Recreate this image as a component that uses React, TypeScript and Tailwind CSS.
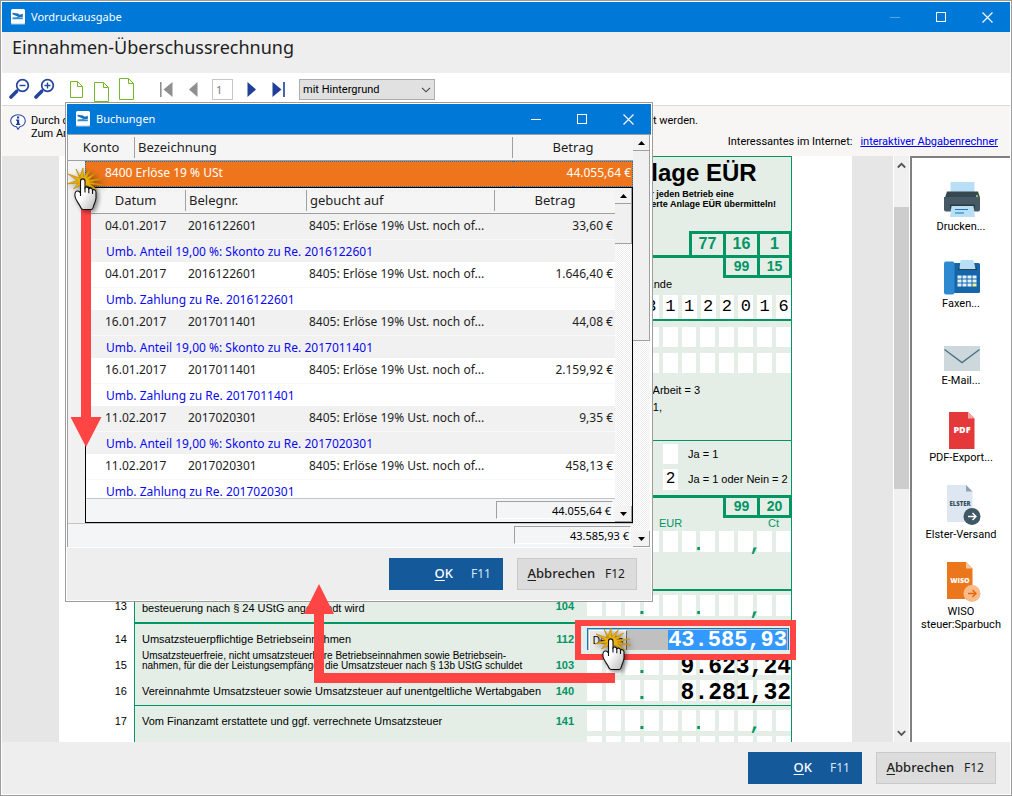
import type { ReactNode } from "react";
import clsx from "clsx";

interface Booking {
  date: string;
  receipt: string;
  account: string;
  amount: string;
  note: string;
}

const bookings: Booking[] = [
  {
    date: "04.01.2017",
    receipt: "2016122601",
    account: "8405: Erlöse 19% Ust. noch of...",
    amount: "33,60 €",
    note: "Umb. Anteil 19,00 %: Skonto zu Re. 2016122601",
  },
  {
    date: "04.01.2017",
    receipt: "2016122601",
    account: "8405: Erlöse 19% Ust. noch of...",
    amount: "1.646,40 €",
    note: "Umb. Zahlung zu Re. 2016122601",
  },
  {
    date: "16.01.2017",
    receipt: "2017011401",
    account: "8405: Erlöse 19% Ust. noch of...",
    amount: "44,08 €",
    note: "Umb. Anteil 19,00 %: Skonto zu Re. 2017011401",
  },
  {
    date: "16.01.2017",
    receipt: "2017011401",
    account: "8405: Erlöse 19% Ust. noch of...",
    amount: "2.159,92 €",
    note: "Umb. Zahlung zu Re. 2017011401",
  },
  {
    date: "11.02.2017",
    receipt: "2017020301",
    account: "8405: Erlöse 19% Ust. noch of...",
    amount: "9,35 €",
    note: "Umb. Anteil 19,00 %: Skonto zu Re. 2017020301",
  },
  {
    date: "11.02.2017",
    receipt: "2017020301",
    account: "8405: Erlöse 19% Ust. noch of...",
    amount: "458,13 €",
    note: "Umb. Zahlung zu Re. 2017020301",
  },
];

function AppIcon() {
  return (
    <svg width="15" height="16" viewBox="0 0 15 16">
      <rect x="0" y="0" width="14" height="15" rx="1.5" fill="#fff" />
      <path d="M0 14.5h14v1H0z" fill="#a9cdea" />
      <path d="M1.500 3.800l5.500.7 1.800 1.200 3-.9v3.600l-4.300-.4-6-2.800z" fill="#1c6fb8" />
      <path d="M1.500 8.600l5.500-.7 4.800 1v1.300H1.500z" fill="#2d8fd6" />
    </svg>
  );
}

function TitleBar({ title, dimmed }: { title: string; dimmed?: boolean }) {
  return (
    <div className="flex h-[30px] shrink-0 items-center bg-[#0078d7] pl-[9px] text-white">
      <AppIcon />
      <span className="ml-[5px] flex-1 text-[11px]">{title}</span>
      <button
        aria-label="Minimieren"
        className="flex h-[30px] w-[46px] items-center justify-center"
      >
        <svg width="11" height="11" viewBox="0 0 11 11">
          <path d="M0 5.5h10" stroke={dimmed ? "#5aa7e6" : "#fff"} />
        </svg>
      </button>
      <button
        aria-label="Maximieren"
        className="flex h-[30px] w-[46px] items-center justify-center"
      >
        <svg width="11" height="11" viewBox="0 0 11 11">
          <rect x=".5" y=".5" width="9" height="9" fill="none" stroke="#fff" />
        </svg>
      </button>
      <button
        aria-label="Schließen"
        className="flex h-[30px] w-[46px] items-center justify-center"
      >
        <svg width="11" height="11" viewBox="0 0 11 11">
          <path d="M.5.5l10 10M10.5.5l-10 10" stroke="#fff" strokeWidth="1.1" />
        </svg>
      </button>
    </div>
  );
}

function DialogButtons() {
  return (
    <div className="flex justify-end gap-[14px] text-[13px]">
      <button className="flex h-8 w-[114px] items-center justify-end gap-[18px] bg-[#14599a] pr-3 text-white">
        <span className="font-medium">
          <u className="underline-offset-2">O</u>K
        </span>
        <span className="text-xs text-[#d5e8f7]">F11</span>
      </button>
      <button className="flex h-8 w-[120px] items-center justify-end gap-[10px] border border-[#cacaca] bg-[#dcdcdc] pr-[11px] text-[#1e1e1e]">
        <span className="font-medium">
          <u className="underline-offset-2">A</u>bbrechen
        </span>
        <span className="text-xs">F12</span>
      </button>
    </div>
  );
}

function Magnifier({ plus }: { plus?: boolean }) {
  return (
    <svg width="22" height="22" viewBox="0 0 22 22">
      <circle cx="13.5" cy="7.5" r="5.8" fill="#fff" stroke="#23459c" strokeWidth="1.7" />
      <path d="M10.5 7.5h6" stroke="#23459c" strokeWidth="1.4" />
      {plus && <path d="M13.5 4.5v6" stroke="#23459c" strokeWidth="1.4" />}
      <path d="M8.8 12L7 13.8" stroke="#23459c" strokeWidth="2" />
      <path d="M7.5 13.5L2 19" stroke="#23459c" strokeWidth="3.6" strokeLinecap="round" />
    </svg>
  );
}

function PageIcon({ w, h }: { w: number; h: number }) {
  return (
    <svg width={w} height={h} viewBox={`0 0 ${w} ${h}`}>
      <path
        d={`M.5.5H${w - 5.5}L${w - 0.5} 5.5V${h - 0.5}H.5zM${w - 5.5} .5V5.5H${w - 0.5}`}
        fill="#fff"
        stroke="#76b82a"
      />
    </svg>
  );
}

function Toolbar() {
  return (
    <div className="flex h-[33px] shrink-0 items-center border-b border-[#dadada] bg-white pl-[7px]">
      <button aria-label="Verkleinern">
        <Magnifier />
      </button>
      <button aria-label="Vergrößern" className="ml-[3px]">
        <Magnifier plus />
      </button>
      <button aria-label="Ganze Seite" className="ml-[14px]">
        <PageIcon w={13} h={17} />
      </button>
      <button aria-label="Seitenbreite" className="ml-[11px] pt-[6px]">
        <PageIcon w={15} h={20} />
      </button>
      <button aria-label="Originalgröße" className="ml-[10px]">
        <PageIcon w={15} h={22} />
      </button>
      <button aria-label="Erste Seite" className="ml-[26px]">
        <svg width="13" height="15" viewBox="0 0 13 15">
          <path d="M0 0h1.6v15H0zM12.500 0v15L3.500 7.500z" fill="#8f8f8f" />
        </svg>
      </button>
      <button aria-label="Vorherige Seite" className="ml-4">
        <svg width="9" height="15" viewBox="0 0 9 15">
          <path d="M8.500 0v15L0 7.500z" fill="#8f8f8f" />
        </svg>
      </button>
      <input
        aria-label="Seite"
        defaultValue="1"
        className="ml-[14px] h-[21px] w-[21px] border border-[#c6c6c6] pl-[3px] text-[11px] text-[#777]"
      />
      <button aria-label="Nächste Seite" className="ml-[14px]">
        <svg width="9" height="15" viewBox="0 0 9 15">
          <path d="M.5 0v15L9 7.500z" fill="#1f3f98" />
        </svg>
      </button>
      <button aria-label="Letzte Seite" className="ml-4">
        <svg width="13" height="15" viewBox="0 0 13 15">
          <path d="M11.200 0h1.600v15h-1.600zM.5 0v15l9-7.500z" fill="#1f3f98" />
        </svg>
      </button>
      <div className="relative ml-[14px]">
        <select
          aria-label="Druckansicht"
          className="block h-[21px] w-[136px] appearance-none border border-[#adadad] bg-[#e1e1e1] pl-[3px] font-['Roboto'] text-[11px] leading-none text-black"
        >
          <option>mit Hintergrund</option>
          <option>ohne Hintergrund</option>
        </select>
        <svg className="pointer-events-none absolute top-2 right-1" width="10" height="6" viewBox="0 0 10 6">
          <path d="M1 .8l4 4 4-4" fill="none" stroke="#444" strokeWidth="1.1" />
        </svg>
      </div>
    </div>
  );
}

function InfoBar() {
  return (
    <div className="flex h-[50px] shrink-0 bg-[#f7f6f5] pr-3 pl-2 font-['Roboto'] text-[11px] leading-[13px] text-black">
      <svg className="mt-2 shrink-0" width="16" height="16" viewBox="0 0 16 16">
        <path
          d="M8 .7c4 0 7.300 2.600 7.300 6s-2.800 5.700-5.500 6L8 15.300l-1.500-2.600C3.500 12.400.7 10 .7 6.700S4 .7 8 .7z"
          fill="#fff"
          stroke="#2a4ba0"
          strokeWidth="1.1"
        />
        <path d="M7 2.500h2.200v2H7zM6 5.500h3.200v4.200h1v1.300H6V9.700h1V6.800H6z" fill="#1f3f98" />
      </svg>
      <div className="ml-[5px] flex w-[667px] shrink-0 items-start justify-between pt-2">
        <p>
          Durch die Schaltfläche
          <br />
          Zum Anzeigen
        </p>
        <p>angezeigt werden.</p>
      </div>
      <p className="-ml-[200px] flex-1 self-end pb-2 text-right whitespace-nowrap">
        Interessantes im Internet:
        <a href="#abgabenrechner" className="ml-2 text-[#0000ee] underline">
          interaktiver Abgabenrechner
        </a>
      </p>
    </div>
  );
}

function Cells({ digits = "", count = 11 }: { digits?: string; count?: number }) {
  return (
    <div className={clsx("grid h-5 gap-1", count === 11 ? "w-[204px] grid-cols-11" : "w-[147px] grid-cols-8")}>
      {Array.from({ length: count }, (_, i) => (
        <span
          key={i}
          className="bg-white text-center font-['Liberation_Mono'] text-[17px] leading-[24px] text-black"
        >
          {digits[i]}
        </span>
      ))}
    </div>
  );
}

const marks: Record<number, string> = { 2: ".", 5: ".", 8: "," };

// eleven boxes with the printed thousands and decimal marks; a value is typed over them
function AmountField({ value }: { value?: string }) {
  return (
    <div className="relative">
      <div className="grid h-[21px] w-[204px] grid-cols-11 gap-1">
        {Array.from({ length: 11 }, (_, i) => (
          <span key={i} className="relative bg-white">
            {marks[i] && !(value && i > 2) && (
              <span className="absolute -right-2 bottom-0 w-3 text-center font-['Liberation_Mono'] text-[20px] leading-[14px] font-bold text-[#009663]">
                {marks[i]}
              </span>
            )}
          </span>
        ))}
      </div>
      {value && (
        <span className="absolute right-0 -bottom-1 font-['Liberation_Mono'] text-[23px] leading-[24px] font-bold text-black">
          {value}
        </span>
      )}
    </div>
  );
}

interface FormRowProps {
  no?: string;
  code?: string;
  className?: string;
  text?: ReactNode;
  children?: ReactNode;
}

function FormRow({ no, code, className, text, children }: FormRowProps) {
  return (
    <div className="flex">
      <div className="w-[75px] shrink-0 pt-1 pr-[7px] text-right leading-[22px]">{no}</div>
      <div className={clsx("flex min-w-0 flex-1 items-start border-x border-[#009663] bg-[#e4ede6] pl-[7px]", className)}>
        <div className="min-w-0 flex-1 leading-[22px] whitespace-nowrap">{text}</div>
        <div className="mr-[13px] pt-1 leading-[22px] font-bold text-[#009663]">{code}</div>
        <div className="pt-1">{children}</div>
      </div>
    </div>
  );
}

function FormSection({ className, children }: { className?: string; children: ReactNode }) {
  return (
    <div
      className={clsx(
        "ml-[75px] flex flex-col items-end border-x border-[#009663] bg-[#e4ede6]",
        className,
      )}
    >
      {children}
    </div>
  );
}

function CodePair({ left, right }: { left: string; right: string }) {
  return (
    <div className="-mr-px flex h-5 border-[3px] border-t-0 border-[#009663] text-center text-[14px] leading-[17px] font-bold text-[#009663]">
      <span className="w-[31px]">{left}</span>
      <span className="w-[32px] border-l-[3px]">{right}</span>
    </div>
  );
}

function TaxForm() {
  return (
    <div className="w-[793px] shrink-0 bg-white pr-[60px] font-['Liberation_Sans'] text-[11px] text-black">
      <FormSection className="h-[102px] justify-between border-t border-b-[3px]">
        <div className="pr-[15px]">
          <h2 className="pt-[2px] text-[24px] leading-[27px] font-bold">Anlage EÜR</h2>
          <p className="pt-[3px] text-[9px] leading-[10px] font-bold whitespace-nowrap">
            Bitte für jeden Betrieb eine
            <br />
            gesonderte Anlage EÜR übermitteln!
          </p>
        </div>
        <div className="-mr-px flex h-[24px] border-[3px] border-b-0 border-[#009663] text-center text-[16px] leading-[20px] font-bold text-[#009663]">
          <span className="w-[31px]">77</span>
          <span className="w-[34px] border-l-[3px]">16</span>
          <span className="w-[32px] border-l-[3px]">1</span>
        </div>
      </FormSection>
      <FormSection className="h-[63px] border-b-2">
        <CodePair left="99" right="15" />
        <p className="pr-[119px] leading-[12px]">bis Ende</p>
        <div className="pt-[5px]">
          <Cells count={8} digits="31122016" />
        </div>
      </FormSection>
      <FormSection className="h-[120px] gap-[6px] border-b pt-[6px]">
        <Cells />
        <Cells />
        <div className="pt-[3px] leading-[17px]">
          <p className="pr-[91px] text-right">ohne Arbeit = 3</p>
          <p className="pr-[129px] text-right">1,</p>
        </div>
      </FormSection>
      <FormSection className="h-[57px] gap-[5px] border-b-[3px] pt-[3px]">
        <div className="flex w-[128px] items-center gap-[10px]">
          <span className="h-5 w-[15px] bg-white" />
          Ja = 1
        </div>
        <div className="flex w-[128px] items-center gap-[10px] whitespace-nowrap">
          <span className="h-[21px] w-[15px] bg-white text-center font-['Liberation_Mono'] text-[16px] leading-[20px]">2</span>
          Ja = 1 oder Nein = 2
        </div>
      </FormSection>
      <FormSection className="h-[93px] border-b-2">
        <CodePair left="99" right="20" />
        <div className="flex h-[13px] w-[132px] justify-between pr-3 leading-[10px] text-[#009663]">
          <span>EUR</span>
          <span>Ct</span>
        </div>
        <AmountField />
      </FormSection>
      <FormRow no="13" code="104" className="h-[33px] border-b-2" text={<p className="pt-[6px]">besteuerung nach § 24 UStG angewandt wird</p>}>
        <AmountField />
      </FormRow>
      <FormRow no="14" code="112" className="h-[26px]" text={<p className="pt-1">Umsatzsteuerpflichtige Betriebseinnahmen</p>}>
        <div className="mr-[2px] flex h-[25px] w-[202px] items-stretch border border-[#0078d7] bg-[#c0c0c0] p-px">
          <button className="w-[38px] border border-t-white border-r-[#696969] border-b-[#696969] border-l-white bg-[#e8e8e8] text-[10px] leading-none">
            Details
          </button>
          <input
            aria-label="Umsatzsteuerpflichtige Betriebseinnahmen"
            defaultValue="43.585,93"
            className="ml-auto w-[119px] bg-[#3399ff] text-right font-['Liberation_Mono'] text-[22px] font-bold text-white"
          />
        </div>
      </FormRow>
      <FormRow
        no="15"
        code="103"
        className="h-[26px]"
        text={
          <p className="pt-px text-[10px] leading-[10px]">
            Umsatzsteuerfreie, nicht umsatzsteuerbare Betriebseinnahmen sowie Betriebsein-
            <br />
            nahmen, für die der Leistungsempfänger die Umsatzsteuer nach § 13b UStG schuldet
          </p>
        }
      >
        <AmountField value="9.623,24" />
      </FormRow>
      <FormRow
        no="16"
        code="140"
        className="h-[30px] border-b"
        text={<p className="pt-1">Vereinnahmte Umsatzsteuer sowie Umsatzsteuer auf unentgeltliche Wertabgaben</p>}
      >
        <AmountField value="8.281,32" />
      </FormRow>
      <FormRow
        no="17"
        code="141"
        className="h-[26px]"
        text={<p className="pt-1">Vom Finanzamt erstattete und ggf. verrechnete Umsatzsteuer</p>}
      >
        <AmountField />
      </FormRow>
      <FormRow className="h-[26px]">
        <Cells />
      </FormRow>
    </div>
  );
}

function ViewerScrollbar() {
  return (
    <div className="flex w-[17px] shrink-0 flex-col items-center border-x border-white bg-[#f0f0f0]">
      <svg className="my-[6px] shrink-0" width="9" height="7" viewBox="0 0 9 7">
        <path d="M.8 5.500l3.700-3.700 3.700 3.700" fill="none" stroke="#555" strokeWidth="1.800" />
      </svg>
      <div className="mt-8 h-[282px] w-full bg-[#cdcdcd]" />
      <svg className="mt-auto mb-[5px] shrink-0" width="9" height="7" viewBox="0 0 9 7">
        <path d="M.8 1.200l3.700 3.700 3.700-3.700" fill="none" stroke="#555" strokeWidth="1.800" />
      </svg>
    </div>
  );
}

function PrinterIcon() {
  return (
    <svg width="40" height="40" viewBox="0 0 40 40">
      <path d="M9.500 2h24v11h-24z" fill="#b9dff7" />
      <path d="M6 11.500h31l2 6H4z" fill="#37474f" />
      <path d="M3 17h36v12.500a2 2 0 0 1-2 2H5a2 2 0 0 1-2-2z" fill="#455a64" />
      <path d="M9 24.500h25v4H9z" fill="#2c3940" />
      <path d="M10.500 26h22l1.500 11H9z" fill="#b9dff7" />
      <path d="M14 29.500h13M14 33h9" stroke="#1f75b8" strokeWidth="1.200" />
      <circle cx="36" cy="16" r="1.200" fill="#8bc34a" />
    </svg>
  );
}

function FaxIcon() {
  return (
    <svg width="40" height="40" viewBox="0 0 40 40">
      <rect x="12" y="6" width="27" height="30" rx="1.500" fill="#1565ab" />
      <rect x="3" y="4.500" width="10.500" height="33" rx="2" fill="#2e8ad0" />
      <path d="M17 10.500h19v2.500H17z" fill="#2b4552" />
      <path d="M19.500 3h13l2 9h-16z" fill="#b9dff7" />
      {[18.5, 22.5, 26.5].map((y) =>
        [16.5, 21.5, 26.5, 31.5].map((x) => (
          <rect
            key={`${x}-${y}`}
            x={x}
            y={y}
            width="4"
            height="3"
            fill={x === 31.5 && y === 26.5 ? "#f7f08a" : "#e3f2fd"}
          />
        )),
      )}
    </svg>
  );
}

function MailIcon() {
  return (
    <svg width="40" height="40" viewBox="0 0 40 40">
      <path d="M3 12h36v25H3z" fill="#cdd8dc" />
      <path d="M3.500 15.500L21 28.500l17.500-13" fill="none" stroke="#4f7484" strokeWidth="1.500" />
    </svg>
  );
}

interface DocIconProps {
  label: string;
  fill: string;
  fold: string;
  ink: string;
  badge?: string;
  badgeInk?: string;
}

function DocIcon({ label, fill, fold, ink, badge, badgeInk }: DocIconProps) {
  // documents with a round badge sit a little higher and further left
  const x = badge ? 6 : 8;
  const y = badge ? -3 : 1;
  return (
    <svg width="40" height="40" viewBox="0 0 40 40" className="overflow-visible">
      <g transform={`translate(${x} ${y})`}>
        <path d="M0 0h19l6.500 6.500V37H0z" fill={fill} />
        <path d="M19 0l6.500 6.500H19z" fill={fold} />
        <text
          x="13"
          y="21"
          textAnchor="middle"
          fontFamily="Open Sans"
          fontWeight="800"
          fontSize={label === "PDF" ? 9 : label === "WISO" ? 7 : 6}
          fill={ink}
        >
          {label}
        </text>
        {badge && (
          <>
            <circle cx="25" cy="31.500" r="8.500" fill={badge} />
            <path d="M21 31.500h8M25.500 28l3.500 3.500-3.500 3.500" fill="none" stroke={badgeInk} strokeWidth="1.400" />
          </>
        )}
      </g>
    </svg>
  );
}

const exportTargets = [
  { label: "Drucken...", icon: <PrinterIcon /> },
  { label: "Faxen...", icon: <FaxIcon /> },
  { label: "E-Mail...", icon: <MailIcon /> },
  { label: "PDF-Export...", icon: <DocIcon label="PDF" fill="#e5383b" fold="#f6a3a4" ink="#fff" /> },
  {
    label: "Elster-Versand",
    icon: (
      <DocIcon label="ELSTER" fill="#dde6f1" fold="#8fa3b0" ink="#37505e" badge="#3f5863" badgeInk="#fff" />
    ),
  },
  {
    label: "WISO steuer:Sparbuch",
    icon: (
      <DocIcon label="WISO" fill="#ec761c" fold="#f9c79c" ink="#fff" badge="#f8bb8a" badgeInk="#e8650d" />
    ),
  },
];

function ExportSidebar() {
  return (
    <div className="flex w-[100px] shrink-0 flex-col gap-6 border-t-2 border-l-2 border-[#808080] bg-white pt-[22px]">
      {exportTargets.map((target) => (
        <button
          key={target.label}
          className="flex flex-col items-center font-['Roboto'] text-[11px] leading-[13px] text-black"
        >
          {target.icon}
          <span>{target.label}</span>
        </button>
      ))}
    </div>
  );
}

function ArrowButton({ down }: { down?: boolean }) {
  return (
    <button
      aria-label={down ? "Nach unten" : "Nach oben"}
      className="flex h-4 w-full shrink-0 items-center justify-center border-r border-b border-[#a0a0a0] bg-[#f3f3f3]"
    >
      <svg width="7" height="4" viewBox="0 0 7 4">
        <path d={down ? "M0 0h7L3.500 4z" : "M0 4h7L3.500 0z"} fill="#000" />
      </svg>
    </button>
  );
}

function ListScrollbar({ thumb }: { thumb: string }) {
  return (
    <div className="flex w-[17px] shrink-0 flex-col bg-[repeating-conic-gradient(#ffffff_0_25%,#eeeeee_0_50%)] bg-[length:2px_2px]">
      <ArrowButton />
      <div className={clsx("border-r border-b border-[#a0a0a0] bg-[#f0f0f0]", thumb)} />
      <div className="flex-1" />
      <ArrowButton down />
    </div>
  );
}

function SumBox({ value }: { value: string }) {
  return (
    <div className="flex h-[23px] shrink-0 justify-end bg-[#f4f5f7] pt-[2px] pr-[2px]">
      <output className="h-[18px] w-[117px] border border-t-[#a0a0a0] border-r-white border-b-white border-l-[#a0a0a0] pr-px text-right text-[11px] leading-[17px] text-black">
        {value}
      </output>
    </div>
  );
}

interface HeadCellProps {
  className?: string;
  span?: number;
  last?: boolean;
  children: ReactNode;
}

function HeadCell({ className, span, last, children }: HeadCellProps) {
  return (
    <th colSpan={span} className={clsx("border-b border-[#a0a0a0] p-0 py-[2px] font-normal", className)}>
      <div className={clsx("h-[21px] leading-[21px]", !last && "border-r border-[#a0a0a0]")}>{children}</div>
    </th>
  );
}

function BookingList() {
  return (
    <div className="flex min-h-0 flex-1 border border-black bg-white">
      <div className="flex min-w-0 flex-1 flex-col">
        <div className="min-h-0 flex-1 overflow-hidden">
          <table className="w-full table-fixed border-separate border-spacing-0">
            <colgroup>
              <col className="w-[100px]" />
              <col className="w-[121px]" />
              <col className="w-[188px]" />
              <col />
            </colgroup>
            <thead className="bg-[#f5f5f5]">
              <tr>
                <HeadCell>Datum</HeadCell>
                <HeadCell className="pl-[3px] text-left">Belegnr.</HeadCell>
                <HeadCell className="pl-[3px] text-left">gebucht auf</HeadCell>
                <HeadCell last>Betrag</HeadCell>
              </tr>
            </thead>
            {bookings.map((booking, i) => (
              <tbody key={booking.note} className={clsx("whitespace-nowrap", i % 2 === 0 ? "bg-[#f1f1f1]" : "bg-white")}>
                <tr className="h-[26px] text-xs">
                  <td className="border-b border-[#f8f8f8] p-0 pb-px pl-[19px]">{booking.date}</td>
                  <td className="border-b border-[#f8f8f8] p-0 pb-px pl-[2px]">{booking.receipt}</td>
                  <td className="border-b border-[#f8f8f8] p-0 pb-px pl-[2px]">{booking.account}</td>
                  <td className="border-b border-[#f8f8f8] p-0 pr-[2px] pb-px text-right">{booking.amount}</td>
                </tr>
                <tr className="h-[22px] text-xs text-[#0a0aee]">
                  <td colSpan={4} className="p-0 pt-[2px] pl-5">
                    {booking.note}
                  </td>
                </tr>
              </tbody>
            ))}
          </table>
        </div>
        <div className="border-t border-[#c4c4c4]">
          <SumBox value="44.055,64 €" />
        </div>
      </div>
      <ListScrollbar thumb="h-[40px]" />
    </div>
  );
}

function BookingsDialog() {
  return (
    <div
      role="dialog"
      aria-label="Buchungen"
      className="absolute top-[101px] left-[64px] flex h-[500px] w-[588px] flex-col border border-[#9c9c9c] bg-white p-px text-[13px] text-[#1e1e1e]"
    >
      <TitleBar title="Buchungen" />
      <div className="flex min-h-0 flex-1 border-t border-l border-[#a0a0a0]">
        <div className="flex min-w-0 flex-1 flex-col bg-[#f1f1f1]">
          <table className="w-full table-fixed border-separate border-spacing-0">
            <colgroup>
              <col className="w-[17px]" />
              <col className="w-[50px]" />
              <col />
              <col className="w-[120px]" />
            </colgroup>
            <thead className="bg-[#f5f5f5]">
              <tr>
                <HeadCell span={2}>Konto</HeadCell>
                <HeadCell className="pl-[3px] text-left">Bezeichnung</HeadCell>
                <HeadCell last>Betrag</HeadCell>
              </tr>
            </thead>
            <tbody>
              <tr className="h-[26px] text-xs text-white">
                <td className="bg-[#f5f5f5] p-0" />
                <td colSpan={2} className="border-y border-l border-dotted border-[#0078d7] bg-[#ee751c] p-0 pb-[2px] pl-[19px]">
                  8400 Erlöse 19 % USt
                </td>
                <td className="border-y border-r border-dotted border-[#0078d7] bg-[#ee751c] p-0 pr-px pb-[2px] text-right">
                  44.055,64 €
                </td>
              </tr>
            </tbody>
          </table>
          <div className="flex min-h-0 flex-1 flex-col pl-[17px]">
            <BookingList />
          </div>
          <div className="border-t border-[#c4c4c4]">
            <SumBox value="43.585,93 €" />
          </div>
        </div>
        <ListScrollbar thumb="h-[190px]" />
        <div className="w-px bg-white" />
      </div>
      <div className="mt-px bg-[#eeeeee] py-[10px] pr-[14px]">
        <DialogButtons />
      </div>
    </div>
  );
}

function ClickingHand({ className }: { className: string }) {
  return (
    <svg className={clsx("pointer-events-none absolute drop-shadow-[2px_2px_2px_rgba(0,0,0,0.45)]", className)} width="36" height="46" viewBox="0 0 36 46">
      <defs>
        <linearGradient id="palm" x1="0" y1="0" x2="1" y2="1">
          <stop offset=".45" stopColor="#fff" />
          <stop offset="1" stopColor="#b5b5b5" />
        </linearGradient>
      </defs>
      <path
        d="M14 10L9 1l3.500 8.500L16 0l.5 9 7-7.500-4 8.500 9-5-7 7 13-1-12 3 13 3-13-1 8 6-11-5-6 7 2-8-9 5 5-6-12 1 11-3.500L1 6l10 3.500z"
        fill="#eab012"
        stroke="#c99000"
        strokeWidth=".8"
      />
      <path
        d="M13.500 13.500c0-3.500 4.500-3.500 4.500 0v6.500c1-1.500 3.500-1.200 3.800.8 1.200-1.200 3.500-.6 3.700 1.200 1.500-.8 3.500 0 3.500 2v6c0 3-1.500 5-2.300 7.500-.4 2-1 4-2.700 4h-8c-1.500 0-2-1-2.500-2.500-1-3-5-6.500-5.500-10.500-.3-2.500 0-5 2-5.500 1.500-.3 2.500 0 3.500 2z"
        fill="url(#palm)"
        stroke="#111"
        strokeWidth="1.100"
      />
      <path d="M18 19.500v5M21.800 20.800v4.500M25.500 22v4M13.500 24v4" stroke="#111" strokeWidth="1.100" />
    </svg>
  );
}

// red arrows, frame and pointers that explain the click path
function Annotations() {
  return (
    <>
      <svg className="pointer-events-none absolute top-[199px] left-[70px]" width="31" height="247" viewBox="0 0 31 247">
        <path d="M10 0h10v217h10.500L15 247-.5 217H10z" fill="#ff4444" />
      </svg>
      <svg className="pointer-events-none absolute top-[583px] left-[303px]" width="311" height="99" viewBox="0 0 311 99">
        <path d="M15 0l15 30H20v59h291v10H10V30H0z" fill="#ff4444" />
      </svg>
      <div className="pointer-events-none absolute top-[619px] left-[574px] h-10 w-[221px] border-[6px] border-[#ff4444]" />
      <ClickingHand className="top-[167px] left-[66px]" />
      <ClickingHand className="top-[627px] left-[594px]" />
    </>
  );
}

export default function App() {
  return (
    <main className="relative flex h-screen flex-col overflow-hidden border border-[#9c9c9c] bg-white p-px font-['Noto_Sans',sans-serif]">
      <TitleBar title="Vordruckausgabe" dimmed />
      <h1 className="h-[41px] shrink-0 bg-[#eeeeee] pl-[10px] text-[18px] leading-[30px] text-[#1e1e1e]">
        Einnahmen-Überschussrechnung
      </h1>
      <Toolbar />
      <InfoBar />
      <div className="flex min-h-0 flex-1">
        <div className="flex min-w-0 flex-1 overflow-hidden bg-[#e6e6e6] pl-[57px]">
          <TaxForm />
        </div>
        <ViewerScrollbar />
        <ExportSidebar />
      </div>
      <div className="shrink-0 bg-[#eeeeee] py-[10px] pr-[14px]">
        <DialogButtons />
      </div>
      <BookingsDialog />
      <Annotations />
    </main>
  );
}
